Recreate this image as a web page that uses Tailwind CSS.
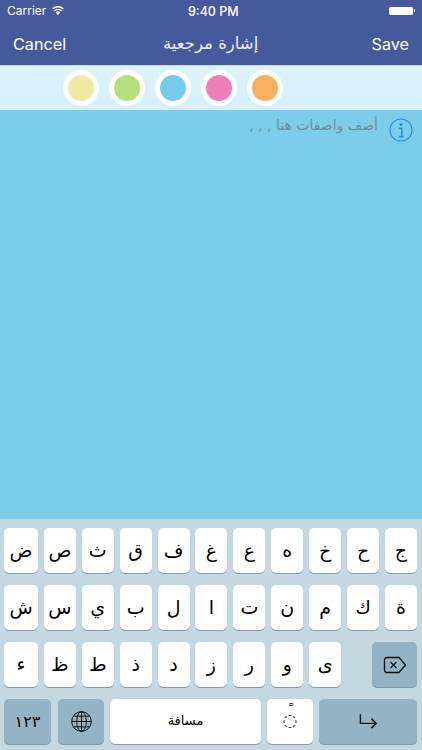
<!doctype html>
<html lang="ar"><head><meta charset="utf-8">
<script src="https://cdn.jsdelivr.net/npm/@tailwindcss/browser@4"></script>
<title>إشارة مرجعية</title></head>
<body class="m-0 h-[750px] w-[422px] overflow-hidden bg-[#7dcdea] font-['Inter','DejaVu_Sans',sans-serif]">
<div class="flex h-[750px] flex-col">
  <header class="h-[65px] shrink-0 bg-[#46599b] text-white">
    <div class="relative flex h-[21px] items-center justify-between px-[7px] text-[12px]">
      <div class="flex items-center gap-[6px]"><span>Carrier</span>
        <svg width="12" height="9" viewBox="0 0 12 9" fill="none" stroke="white" stroke-width="1.4"><path d="M.6 3a7.6 7.6 0 0 1 10.8 0M2.4 4.9a5 5 0 0 1 7.2 0"/><path d="M6 9 3.6 6.4a3.4 3.4 0 0 1 4.8 0z" fill="white" stroke="none"/></svg></div>
      <span class="absolute left-[188px] top-[3px] text-[12.5px] font-medium">9:40 PM</span>
      <div class="flex items-center"><div class="h-[8px] w-[24px] rounded-[1.5px] bg-white"></div><div class="ml-[1px] h-[3px] w-[1px] bg-white"></div></div>
    </div>
    <div class="relative flex h-[44px] items-center justify-between px-[13px] pt-[2px] text-[16.2px]">
      <span>Cancel</span>
      <span dir="rtl" class="absolute left-[163px] top-[11px] font-['DejaVu_Sans'] text-[16.5px] text-white/90">إشارة مرجعية</span>
      <span>Save</span>
    </div>
  </header>
  <div class="flex h-[45px] shrink-0 items-center gap-[10px] border-t border-[#c4dceb] bg-gradient-to-b from-[#def3fc] to-[#d5f0fc] pl-[63px]">
    <div class="h-[36px] w-[36px] rounded-full border-[5px] border-white bg-[#f2e9a5]"></div>
    <div class="h-[36px] w-[36px] rounded-full border-[5px] border-white bg-[#b3e07c]"></div>
    <div class="h-[36px] w-[36px] rounded-full border-[5px] border-white bg-[#76cbec]"></div>
    <div class="h-[36px] w-[36px] rounded-full border-[5px] border-white bg-[#ea7fb9]"></div>
    <div class="h-[36px] w-[36px] rounded-full border-[5px] border-white bg-[#f6b05f]"></div>
  </div>
  <main class="flex flex-1 items-start justify-end gap-[11px] pr-[9px] pt-[6px]">
    <span dir="rtl" class="font-['DejaVu_Sans'] text-[14px] leading-[18px] text-[#6f8d9b]">أضف واصفات هنا , , ,</span>
    <svg class="mt-[1.5px]" width="24" height="24" viewBox="0 0 24 24" fill="none"><circle cx="12" cy="12" r="11" stroke="#1f8fe8" stroke-width="1.1"/><circle cx="12" cy="6.6" r="1.5" fill="#1f8fe8"/><path d="M9.6 10.2h3.2v8.2M9.4 18.6h5.2" stroke="#1f8fe8" stroke-width="1.5"/></svg>
  </main>
  <section class="flex h-[231px] shrink-0 flex-col gap-[12px] bg-[#c4d8e2] pl-[4px] pr-[5px] pt-[9px] font-['DejaVu_Sans'] text-[19px] text-black">
    <div class="flex gap-[5.9px]">
      <div class="flex h-[45px] w-[34px] items-center justify-center rounded-[5px] bg-white shadow-[0_1px_0_#8b9aa5]">ض</div>
      <div class="flex h-[45px] w-[32px] items-center justify-center rounded-[5px] bg-white shadow-[0_1px_0_#8b9aa5]">ص</div>
      <div class="flex h-[45px] w-[32px] items-center justify-center rounded-[5px] bg-white shadow-[0_1px_0_#8b9aa5]">ث</div>
      <div class="flex h-[45px] w-[32px] items-center justify-center rounded-[5px] bg-white shadow-[0_1px_0_#8b9aa5]">ق</div>
      <div class="flex h-[45px] w-[32px] items-center justify-center rounded-[5px] bg-white shadow-[0_1px_0_#8b9aa5]">ف</div>
      <div class="flex h-[45px] w-[32px] items-center justify-center rounded-[5px] bg-white shadow-[0_1px_0_#8b9aa5]">غ</div>
      <div class="flex h-[45px] w-[32px] items-center justify-center rounded-[5px] bg-white shadow-[0_1px_0_#8b9aa5]">ع</div>
      <div class="flex h-[45px] w-[32px] items-center justify-center rounded-[5px] bg-white shadow-[0_1px_0_#8b9aa5]">ه</div>
      <div class="flex h-[45px] w-[32px] items-center justify-center rounded-[5px] bg-white shadow-[0_1px_0_#8b9aa5]">خ</div>
      <div class="flex h-[45px] w-[32px] items-center justify-center rounded-[5px] bg-white shadow-[0_1px_0_#8b9aa5]">ح</div>
      <div class="flex h-[45px] w-[32px] items-center justify-center rounded-[5px] bg-white shadow-[0_1px_0_#8b9aa5]">ج</div>
    </div>
    <div class="flex gap-[5.9px]">
      <div class="flex h-[45px] w-[34px] items-center justify-center rounded-[5px] bg-white shadow-[0_1px_0_#8b9aa5]">ش</div>
      <div class="flex h-[45px] w-[32px] items-center justify-center rounded-[5px] bg-white shadow-[0_1px_0_#8b9aa5]">س</div>
      <div class="flex h-[45px] w-[32px] items-center justify-center rounded-[5px] bg-white shadow-[0_1px_0_#8b9aa5]">ي</div>
      <div class="flex h-[45px] w-[32px] items-center justify-center rounded-[5px] bg-white shadow-[0_1px_0_#8b9aa5]">ب</div>
      <div class="flex h-[45px] w-[32px] items-center justify-center rounded-[5px] bg-white shadow-[0_1px_0_#8b9aa5]">ل</div>
      <div class="flex h-[45px] w-[32px] items-center justify-center rounded-[5px] bg-white shadow-[0_1px_0_#8b9aa5]">ا</div>
      <div class="flex h-[45px] w-[32px] items-center justify-center rounded-[5px] bg-white shadow-[0_1px_0_#8b9aa5]">ت</div>
      <div class="flex h-[45px] w-[32px] items-center justify-center rounded-[5px] bg-white shadow-[0_1px_0_#8b9aa5]">ن</div>
      <div class="flex h-[45px] w-[32px] items-center justify-center rounded-[5px] bg-white shadow-[0_1px_0_#8b9aa5]">م</div>
      <div class="flex h-[45px] w-[32px] items-center justify-center rounded-[5px] bg-white shadow-[0_1px_0_#8b9aa5]">ك</div>
      <div class="flex h-[45px] w-[32px] items-center justify-center rounded-[5px] bg-white shadow-[0_1px_0_#8b9aa5]">ة</div>
    </div>
    <div class="flex gap-[5.9px]">
      <div class="flex h-[45px] w-[34px] items-center justify-center rounded-[5px] bg-white shadow-[0_1px_0_#8b9aa5]">ء</div>
      <div class="flex h-[45px] w-[32px] items-center justify-center rounded-[5px] bg-white shadow-[0_1px_0_#8b9aa5]">ظ</div>
      <div class="flex h-[45px] w-[32px] items-center justify-center rounded-[5px] bg-white shadow-[0_1px_0_#8b9aa5]">ط</div>
      <div class="flex h-[45px] w-[32px] items-center justify-center rounded-[5px] bg-white shadow-[0_1px_0_#8b9aa5]">ذ</div>
      <div class="flex h-[45px] w-[32px] items-center justify-center rounded-[5px] bg-white shadow-[0_1px_0_#8b9aa5]">د</div>
      <div class="flex h-[45px] w-[32px] items-center justify-center rounded-[5px] bg-white shadow-[0_1px_0_#8b9aa5]">ز</div>
      <div class="flex h-[45px] w-[32px] items-center justify-center rounded-[5px] bg-white shadow-[0_1px_0_#8b9aa5]">ر</div>
      <div class="flex h-[45px] w-[32px] items-center justify-center rounded-[5px] bg-white shadow-[0_1px_0_#8b9aa5]">و</div>
      <div class="flex h-[45px] w-[32px] items-center justify-center rounded-[5px] bg-white shadow-[0_1px_0_#8b9aa5]">ى</div>
      <div class="ml-auto flex h-[45px] w-[45px] items-center justify-center rounded-[5px] bg-[#94b4c6] shadow-[0_1px_0_#7f97a6]">
        <svg width="24" height="18" viewBox="0 0 24 18" fill="none" stroke="#111" stroke-width="1.4" stroke-linejoin="round"><path d="M4 1.5h12l6.500 7.500-6.500 7.500H4a2.500 2.500 0 0 1-2.500-2.500V4A2.500 2.500 0 0 1 4 1.500z"/><path d="m7.500 6 6 6m0-6-6 6" stroke-width="1.1"/></svg>
      </div>
    </div>
    <div class="flex gap-[6px]">
      <div class="flex h-[45px] w-[47px] items-center justify-center rounded-[5px] bg-[#94b4c6] text-[16px] shadow-[0_1px_0_#7f97a6]">١٢٣</div>
      <div class="ml-[1px] flex h-[45px] w-[46px] items-center justify-center rounded-[5px] bg-[#94b4c6] shadow-[0_1px_0_#7f97a6]">
        <svg width="21" height="21" viewBox="0 0 21 21" fill="none" stroke="#111" stroke-width="1"><circle cx="10.500" cy="10.500" r="9.800"/><ellipse cx="10.500" cy="10.500" rx="4.800" ry="9.800"/><path d="M10.500.7v19.600M.7 10.500h19.600M2.300 5.200h16.400M2.300 15.800h16.400"/></svg>
      </div>
      <div dir="rtl" class="flex h-[45px] w-[151px] items-center justify-center rounded-[5px] bg-white pb-[2px] text-[13px] shadow-[0_1px_0_#8b9aa5]">مسافة</div>
      <div class="flex h-[45px] w-[46px] flex-col items-center justify-start rounded-[5px] bg-white pt-[4px] text-[#222] shadow-[0_1px_0_#8b9aa5]">
        <span class="h-[9px] text-[15px] leading-[15px]">&nbsp;ً</span>
        <span class="text-[17px] leading-[17px]">◌</span>
      </div>
      <div class="flex h-[45px] w-[98px] items-center justify-center rounded-[5px] bg-[#94b4c6] shadow-[0_1px_0_#7f97a6]">
        <svg class="-mt-[1px]" width="19" height="16" viewBox="0 0 20 16" fill="none" stroke="#111" stroke-width="1.5"><path d="M1.500 1v9.500h16.500M13 5.500l5 5-5 5"/></svg>
      </div>
    </div>
  </section>
</div>
</body></html>
